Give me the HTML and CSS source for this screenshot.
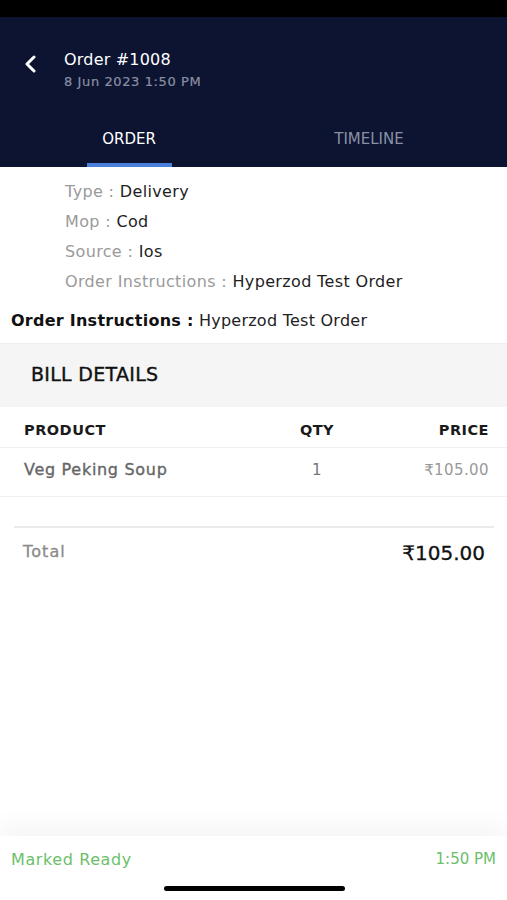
FILE: index.html
```html
<!DOCTYPE html>
<html>
<head>
<meta charset="utf-8">
<link rel="stylesheet" href="styles.css">
</head>
<body>
<div class="screen">
  <div class="status"></div>
  <header class="appbar">
    <div class="titlerow">
      <svg class="back" width="14" height="18" viewBox="0 0 14 18"><path d="M10 2 L3 9 L10 16" fill="none" stroke="#fff" stroke-width="3" stroke-linecap="round" stroke-linejoin="round"/></svg>
      <div class="titles">
        <div class="title">Order #1008</div>
        <div class="date">8 Jun 2023 1:50 PM</div>
      </div>
    </div>
    <nav class="tabs">
      <div class="tab active">ORDER</div>
      <div class="tab">TIMELINE</div>
    </nav>
  </header>
  <main class="content">
    <div class="info">
      <div class="line"><span class="lbl">Type : </span><span class="val">Delivery</span></div>
      <div class="line"><span class="lbl">Mop : </span><span class="val">Cod</span></div>
      <div class="line"><span class="lbl">Source : </span><span class="val">Ios</span></div>
      <div class="line"><span class="lbl">Order Instructions : </span><span class="val">Hyperzod Test Order</span></div>
    </div>
    <div class="instr"><b>Order Instructions :</b> Hyperzod Test Order</div>
    <div class="billhead">BILL DETAILS</div>
    <div class="row thead">
      <span class="c-prod">PRODUCT</span><span class="c-qty">QTY</span><span class="c-price">PRICE</span>
    </div>
    <div class="row item">
      <span class="c-prod">Veg Peking Soup</span><span class="c-qty">1</span><span class="c-price">₹105.00</span>
    </div>
    <div class="total">
      <span class="tlbl">Total</span><span class="tval">₹105.00</span>
    </div>
  </main>
  <footer class="foot">
    <span class="status-txt">Marked Ready</span><span class="status-time">1:50 PM</span>
  </footer>
  <div class="homebar"></div>
</div>
</body>
</html>
```
FILE: styles.css
```css
* { box-sizing: border-box; }
html, body { margin: 0; padding: 0; }
body { font-family: "DejaVu Sans", "Noto Sans", sans-serif; background: #fff; }
.screen { position: relative; width: 507px; height: 900px; display: flex; flex-direction: column; overflow: hidden; }
.status { height: 17px; background: #000; }
.appbar { background: #0c1431; height: 150px; display: flex; flex-direction: column; }
.titlerow { display: flex; align-items: flex-start; padding: 32px 0 0 24px; height: 102px; }
.back { margin-top: 6px; }
.titles { margin-left: 26px; }
.title { color: #fff; font-size: 16px; line-height: 22px; letter-spacing: 0.2px; }
.date { color: #8a8fa3; font-size: 13px; line-height: 18px; margin-top: 2px; letter-spacing: 0.6px; -webkit-text-stroke: 0.2px #8a8fa3; }
.tabs { display: flex; height: 48px; padding: 0 18px 0 9px; }
.tab { flex: 1; display: flex; align-items: center; justify-content: center; font-size: 15px; color: #8a90a4; position: relative; padding-bottom: 8px; }
.tab.active { color: #fff; }
.tab.active::after { content: ""; position: absolute; bottom: 0; left: 78px; width: 85px; height: 4px; background: #4a7fdc; }
.content { flex: 1; }
.info { padding: 10px 0 0 65px; }
.line { font-size: 16px; line-height: 30px; letter-spacing: 0.35px; }
.lbl { color: #9a9a9a; }
.val { color: #1e1e1e; }
.instr { padding: 9px 0 0 11px; font-size: 16px; line-height: 30px; color: #222; height: 46px; letter-spacing: 0.25px; }
.instr b { font-weight: 700; color: #111; }
.billhead { background: #f5f5f5; height: 64px; display: flex; align-items: center; padding: 0 0 3px 31px; font-size: 19px; color: #111; border-top: 1px solid #eee; letter-spacing: 0.3px; -webkit-text-stroke: 0.4px #111; }
.row { display: flex; align-items: center; padding: 0 18px 0 24px; border-bottom: 1px solid #f0f0f0; }
.thead { height: 41px; font-size: 14.5px; font-weight: 700; color: #1a1a1a; padding-top: 6px; letter-spacing: 0.5px; }
.item { height: 49px; font-size: 16px; color: #666; -webkit-text-stroke: 0.35px #666; letter-spacing: 0.7px; padding-bottom: 5px; }
.c-prod { flex: 1; }
.c-qty { width: 60px; text-align: center; margin-right: 42px; }
.c-price { width: 100px; text-align: right; }
.item .c-price { color: #999; -webkit-text-stroke: 0; font-size: 15px; letter-spacing: 0.4px; }
.item .c-qty { color: #777; -webkit-text-stroke: 0; font-size: 15px; }
.total { margin: 29px 13px 0 14px; border-top: 2px solid #ebebeb; height: 52px; display: flex; align-items: center; justify-content: space-between; padding: 0 9px 0 9px; }
.tlbl { color: #8a8a8a; font-size: 16px; letter-spacing: 1.1px; -webkit-text-stroke: 0.3px #8a8a8a; margin-top: -3px; }
.tval { color: #111; font-size: 20px; -webkit-text-stroke: 0.3px #111; }
.foot { height: 64px; display: flex; justify-content: space-between; padding: 14px 11px 0 11px; color: #6bbf6b; font-size: 16px; box-shadow: 0 -14px 20px rgba(0,0,0,0.035); background: #fff; }
.status-txt { letter-spacing: 0.6px; }
.status-time { font-size: 15px; letter-spacing: 0; }
.homebar { position: absolute; left: 164px; bottom: 9px; width: 181px; height: 5px; border-radius: 3px; background: #000; }
```
